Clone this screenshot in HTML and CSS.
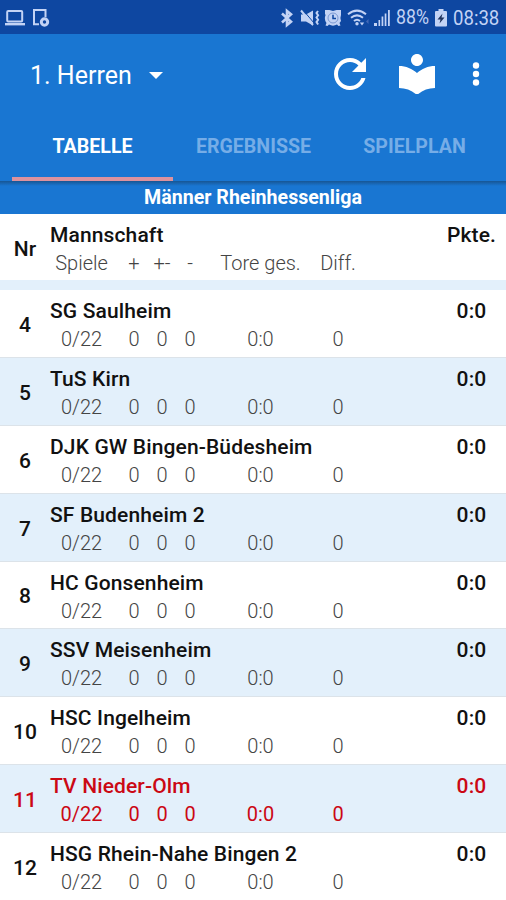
FILE: index.html
```html
<!DOCTYPE html>
<html lang="de">
<head>
    <meta charset="UTF-8">
    <meta name="viewport" content="width=device-width, initial-scale=1.0">
    <title>1. Herren</title>
    <link rel="stylesheet" href="styles.css">
    <script src="main.js" defer></script>
</head>
<body>
    <div class="status-bar">
        <div class="status-left">
            <svg width="22" height="18" viewBox="0 0 22 18" fill="none" stroke="currentColor">
                <rect x="3.2" y="2" width="15" height="10.5" rx="1" stroke-width="2"/>
                <path d="M1 15.2h20" stroke-width="2.4"/>
            </svg>
            <svg width="18" height="20" viewBox="0 0 18 20" fill="none" stroke="currentColor">
                <path d="M7 16.2H2V2h11.5v7" stroke-width="2"/>
                <circle cx="12.5" cy="14" r="3.2" stroke-width="3"/>
            </svg>
        </div>
        <div class="status-right">
            <svg class="bluetooth" width="14" height="20" viewBox="0 0 14 20" fill="none" stroke="currentColor" stroke-width="2.6">
                <path d="M2 5.5l9 8.2L7 17V3l4 3.3L2 14.5"/>
            </svg>
            <svg class="mute" width="21" height="18" viewBox="0 0 21 18" fill="none" stroke="currentColor" stroke-width="2">
                <path d="M1 5.5h5l7-4v15l-7-4H1z" fill="currentColor" stroke="none"/>
                <path d="M3 1l11 13" stroke="#0e47a1" stroke-width="1"/>
                <path d="M1 1.5l12 14.5"/>
                <path d="M18 2l-1.5 2 1.6 2.2-1.6 2.3 1.6 2.3-1.6 2.3 1.6 2.4"/>
            </svg>
            <svg class="alarm" width="18" height="18" viewBox="0 0 18 18">
                <path d="M1 1h4.5L9 2l3.5-1H17v5l-.6 3 .6 3-1.5 2 1 2.5-2 .5-1.500-1.500A8 8 0 0 1 5 15.500L3.500 17l-2-.5 1-2.500A8 8 0 0 1 1.600 6L1 5z" fill="currentColor"/>
                <circle cx="9" cy="9" r="5" fill="none" stroke="#7c99d2" stroke-width="1"/>
                <path d="M9 5.8v3.700h3" fill="none" stroke="#0e47a1" stroke-width="1.5"/>
            </svg>
            <svg class="wifi" width="23" height="18" viewBox="0 0 23 18" fill="none" stroke="currentColor" stroke-width="2">
                <path d="M1 5.300Q10 -2 19 5.300M4 8.700Q10 4 16 8.700M7 12Q10 9.500 13 12"/>
                <circle cx="10" cy="14.800" r="1.700" fill="currentColor" stroke="none"/>
                <path d="M12.800 13.500h4.400L15 16.500z" fill="currentColor" stroke="none"/>
                <path d="M19 12.500l2.500-2.500v5z" fill="#4369b8" stroke="none"/>
            </svg>
            <svg class="signal" width="18" height="18" viewBox="0 0 18 18" fill="currentColor">
                <path d="M1 14h3v3H1zM5.500 11h1.600v6H5.500zM8.600 7.500h1.700V17H8.600zM11.700 4.500h1.700V17h-1.700zM15 1h1.800v16H15z"/>
            </svg>
            <span class="percent">88%</span>
            <svg class="battery" width="12" height="18" viewBox="0 0 12 18">
                <path d="M3.500 0h5v2H11a1 1 0 0 1 1 1v13.500a1 1 0 0 1-1 1H1a1 1 0 0 1-1-1V3a1 1 0 0 1 1-1h2.500z" fill="currentColor"/>
                <path d="M7.500 4.500L2.500 10.500h3L4.500 14.500l5-6h-3z" fill="#20345f"/>
            </svg>
            <span class="clock">08:38</span>
        </div>
    </div>

    <header class="app-bar">
        <div class="toolbar">
            <div class="team-select">1. Herren <span class="caret"></span></div>
            <svg class="refresh" width="32" height="32" viewBox="4 4 16 16" fill="#fff">
                <path d="M17.650 6.350C16.200 4.900 14.210 4 12 4c-4.420 0-7.990 3.580-7.990 8s3.570 8 7.990 8c3.730 0 6.840-2.550 7.730-6h-2.080c-.820 2.330-3.040 4-5.650 4-3.310 0-6-2.690-6-6s2.690-6 6-6c1.660 0 3.140.690 4.220 1.780L13 11h7V4l-2.350 2.350z"/>
            </svg>
            <svg class="reader" width="36" height="40" viewBox="3 2 18 20" fill="#fff">
                <path d="M12 11.550C9.640 9.350 6.480 8 3 8v11c3.480 0 6.640 1.350 9 3.550 2.360-2.190 5.520-3.550 9-3.550V8c-3.480 0-6.640 1.350-9 3.550zM12 8c1.660 0 3-1.340 3-3s-1.340-3-3-3-3 1.340-3 3 1.340 3 3 3z"/>
            </svg>
            <svg class="more" width="8" height="26" viewBox="0 0 8 26" fill="#fff">
                <circle cx="4" cy="4.500" r="3.200"/>
                <circle cx="4" cy="13" r="3.200"/>
                <circle cx="4" cy="21.500" r="3.200"/>
            </svg>
        </div>
        <nav class="tabs">
            <div class="tab active">TABELLE</div>
            <div class="tab">ERGEBNISSE</div>
            <div class="tab">SPIELPLAN</div>
        </nav>
    </header>

    <div class="league"><span>Männer Rheinhessenliga</span></div>

    <div class="row head">
        <div class="nr"><span>Nr</span></div>
        <div class="team">
            <div class="name"><span>Mannschaft</span></div>
            <div class="stats">
                <span>Spiele</span><span>+</span><span>+-</span><span>-</span><span>Tore ges.</span><span>Diff.</span>
            </div>
        </div>
        <div class="points">Pkte.</div>
    </div>

    <main id="table" class="table"></main>
</body>
</html>
```
FILE: styles.css
```css
* {
    box-sizing: border-box;
}

body {
    margin: 0;
    height: 900px;
    overflow: hidden;
    display: flex;
    flex-direction: column;
    background-color: #e3f0fb;
    font-family: Roboto, sans-serif;
    font-size: 20px;
    color: #111;
}

svg {
    display: block;
    flex: none;
}

.status-bar {
    height: 34px;
    flex: none;
    display: flex;
    justify-content: space-between;
    align-items: center;
    padding: 1px 7px 0 4px;
    background-color: #0e47a1;
    color: #c3d3f5;
}

.status-left,
.status-right {
    display: flex;
    align-items: center;
}

.status-left {
    gap: 6px;
}

.bluetooth {
    margin-right: 6px;
}

.mute {
    margin-right: 3px;
}

.alarm {
    margin-right: 5px;
}

.wifi {
    margin-right: 3px;
}

.signal {
    margin-right: 5px;
}

.percent {
    width: 34px;
    margin-right: 5px;
    font-size: 19.5px;
    white-space: nowrap;
    transform: scaleX(0.91);
    transform-origin: left;
}

.battery {
    margin-right: 6px;
}

.clock {
    width: 46px;
    font-size: 20px;
    transform: scaleX(0.93);
    transform-origin: left;
}

.app-bar {
    height: 147px;
    flex: none;
    background-color: #1976d2;
    color: #fff;
}

.toolbar {
    height: 78px;
    display: flex;
    align-items: center;
    padding: 2px 26px 0 30px;
}

.team-select {
    flex: 1;
    display: flex;
    align-items: center;
    padding-top: 2px;
    font-size: 25px;
}

.caret {
    margin-left: 17px;
    border: 7px solid transparent;
    border-top-color: #fff;
    border-bottom: 0;
}

.refresh {
    margin-right: 33px;
}

.reader {
    margin-right: 37px;
}

.tabs {
    height: 69px;
    display: flex;
    padding: 0 11px 0 12px;
}

.tab {
    flex: 1;
    display: flex;
    align-items: center;
    justify-content: center;
    padding-top: 3px;
    border-bottom: 4px solid transparent;
    font-size: 19.6px;
    font-weight: 700;
    color: #76ade7;
}

.tab.active {
    color: #fff;
    border-bottom-color: #dc929e;
}

.league {
    height: 33px;
    flex: none;
    display: flex;
    align-items: center;
    justify-content: center;
    background: linear-gradient(#175694, #1976d2 5px);
    color: #fff;
    font-size: 19.6px;
    font-weight: 700;
}

.row {
    height: 67.875px;
    display: flex;
    border-bottom: 1px solid #dce3e9;
    background-color: #fff;
}

.row:nth-child(even) {
    background-color: #e3f0fb;
}

.row.head {
    height: 66px;
    flex: none;
    margin-bottom: 10px;
    border: 0;
    background-color: #fff;
}

.nr,
.name,
.points {
    font-size: 21px;
    font-weight: 500;
    letter-spacing: 0.13px;
}

.nr {
    width: 50px;
    display: flex;
    align-items: center;
    justify-content: center;
    padding-top: 3px;
}

.team {
    flex: 1;
}

.name {
    height: 29px;
    margin-top: 7px;
    line-height: 29px;
}

.stats {
    display: grid;
    grid-template-columns: 77px 28px 28px 28px 113px 42px;
    margin-left: -7px;
    line-height: 26px;
    font-weight: 300;
    color: #444;
    text-align: center;
    white-space: nowrap;
}

.points {
    width: 69px;
    padding-top: 7px;
    line-height: 29px;
    text-align: center;
}

.row.own,
.row.own .stats {
    color: #cb0814;
}

.row.own .stats {
    font-weight: 400;
}
```
FILE: main.js
```js
const teams = [
    [4, 'SG Saulheim'],
    [5, 'TuS Kirn'],
    [6, 'DJK GW Bingen-Büdesheim'],
    [7, 'SF Budenheim 2'],
    [8, 'HC Gonsenheim'],
    [9, 'SSV Meisenheim'],
    [10, 'HSC Ingelheim'],
    [11, 'TV Nieder-Olm'],
    [12, 'HSG Rhein-Nahe Bingen 2']
];
const ownTeam = 'TV Nieder-Olm';

document.getElementById('table').innerHTML = teams.map(([nr, name]) => `
    <div class="row${name === ownTeam ? ' own' : ''}">
        <div class="nr"><span>${nr}</span></div>
        <div class="team">
            <div class="name"><span>${name}</span></div>
            <div class="stats">
                <span>0/22</span><span>0</span><span>0</span><span>0</span><span>0:0</span><span>0</span>
            </div>
        </div>
        <div class="points">0:0</div>
    </div>
`).join('');
```
